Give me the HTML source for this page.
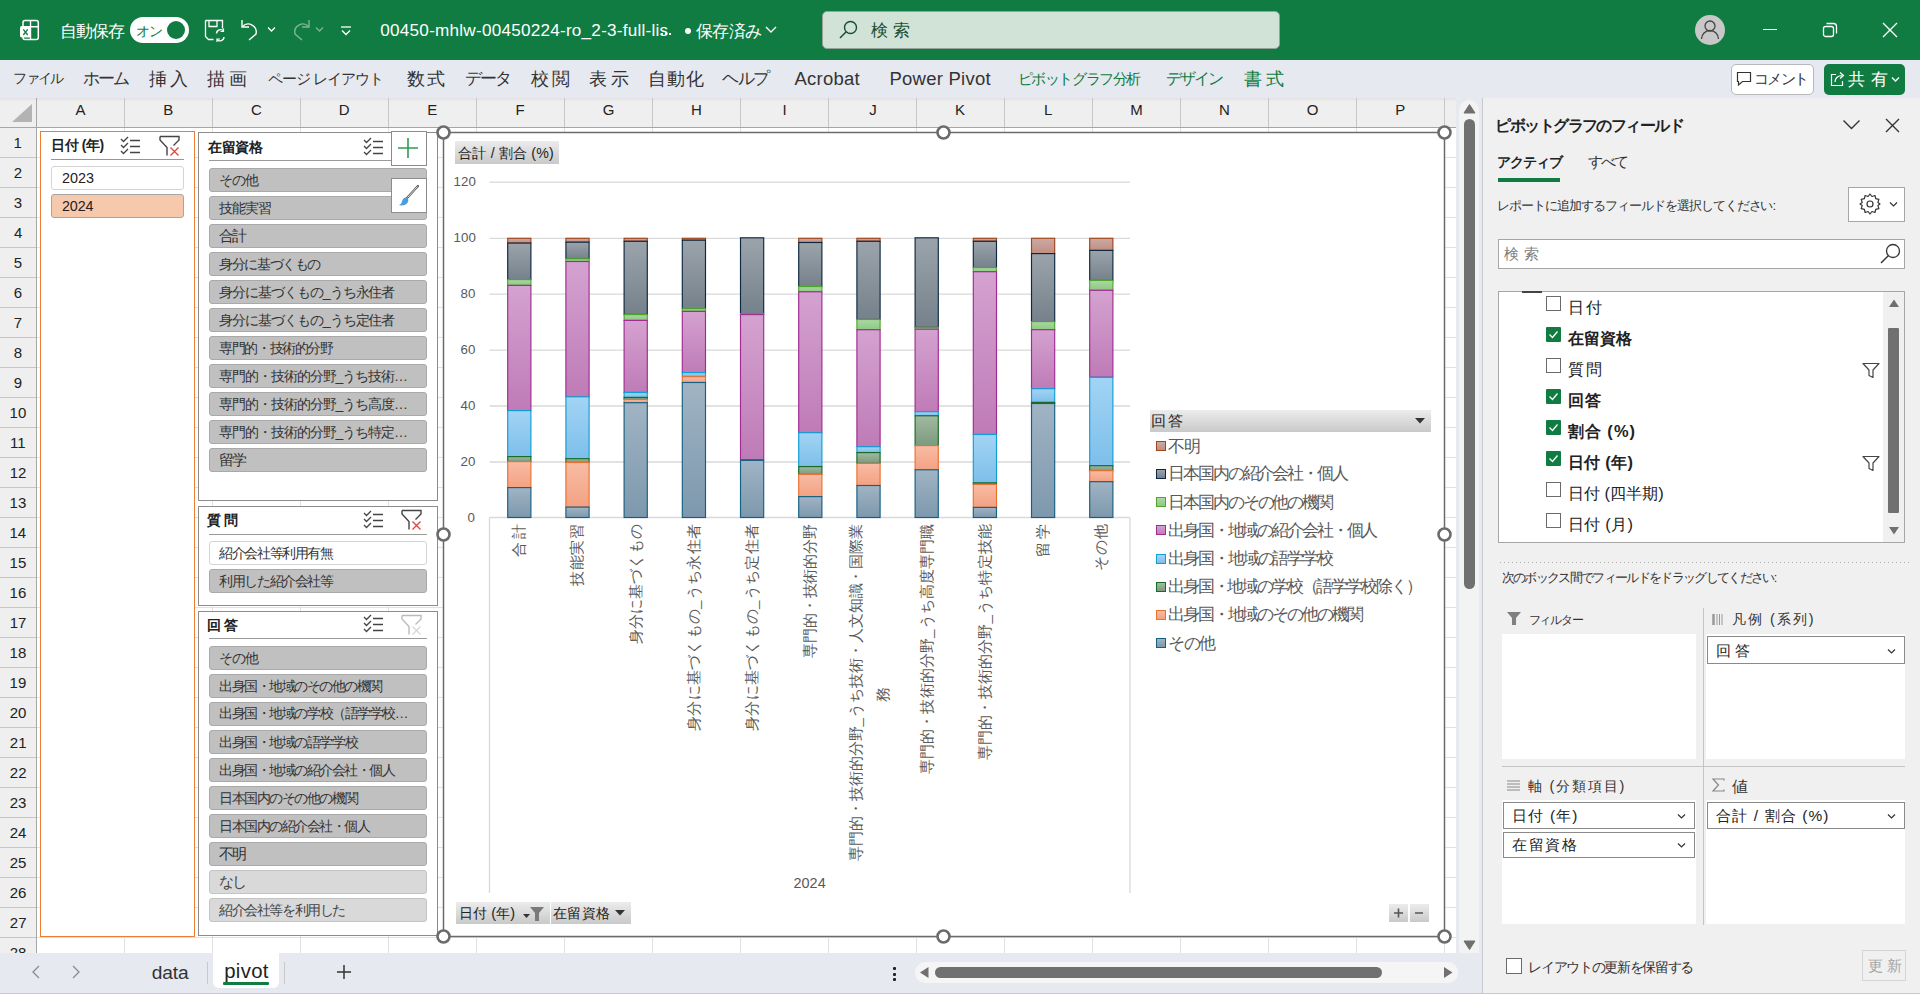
<!DOCTYPE html><html><head><meta charset="utf-8"><style>
*{margin:0;padding:0;box-sizing:border-box}
html,body{width:1920px;height:994px;overflow:hidden;background:#fff;font-family:"Liberation Sans",sans-serif;color:#222}
.a{position:absolute}
.t{position:absolute;white-space:nowrap}
.j{-webkit-text-stroke:0.6px currentColor}
svg{position:absolute;overflow:visible}
</style></head><body>
<div class="a" style="left:0px;top:0px;width:1920px;height:60px;background:#107c41"></div>
<svg style="left:18px;top:18px" width="24" height="24" viewBox="0 0 24 24"><rect x="5" y="2.6" width="15.3" height="19" rx="2" fill="none" stroke="#fff" stroke-width="1.5"/><path d="M12.5 2.6v19M5 8.7h15.3" stroke="#fff" stroke-width="1.4"/><rect x="2" y="8" width="11" height="11.5" rx="1.8" fill="#fff"/><path d="M5.3 11.3l4.4 5.7M9.7 11.3l-4.4 5.7" stroke="#107c41" stroke-width="1.3"/></svg>
<div class="t j" style="--w:63.5;left:59.93px;top:20.5px;line-height:20px;font-size:20.7px;letter-spacing:-0.124px;color:#fff;">自動保存</div>
<div class="a" style="left:130px;top:17px;width:59px;height:26px;background:#fff;border-radius:13px"></div>
<div class="a" style="left:167px;top:21px;width:18px;height:18px;border-radius:9px;background:#107c41"></div>
<div class="t j" style="--w:25.4;left:136.31px;top:20.5px;line-height:20px;font-size:16.93px;letter-spacing:-0.300px;color:#107c41;">オン</div>
<svg style="left:204px;top:19px" width="22" height="22" viewBox="0 0 22 22"><path d="M1.5 1.5h17v8M1.5 1.5v16l3 3h5M5 1.5v6h8v-6" fill="none" stroke="#fff" stroke-width="1.3"/><path d="M12.5 14.5a4 4 0 0 1 7-2.5M20 18a4 4 0 0 1-7 2.5" fill="none" stroke="#fff" stroke-width="1.4"/><path d="M19.5 9.5v3h-3M13 23v-3h3" fill="none" stroke="#fff" stroke-width="1.2"/></svg>
<svg style="left:239px;top:18px" width="24" height="24" viewBox="0 0 24 24"><path d="M3 2v7h7" fill="none" stroke="#fff" stroke-width="1.4"/><path d="M3.5 8.5A8 8 0 0 1 17 16l-7 6" fill="none" stroke="#fff" stroke-width="1.4"/></svg>
<svg style="left:267px;top:26px" width="10" height="8"><path d="M1 1.5l3.5 3.5 3.5-3.5" fill="none" stroke="#fff" stroke-width="1.3"/></svg>
<svg style="left:288px;top:18px" width="24" height="24" viewBox="0 0 24 24" opacity="0.45"><path d="M21 2v7h-7" fill="none" stroke="#fff" stroke-width="1.4"/><path d="M20.5 8.5A8 8 0 0 0 7 16l7 6" fill="none" stroke="#fff" stroke-width="1.4"/></svg>
<svg style="left:315px;top:26px" width="10" height="8" opacity="0.45"><path d="M1 1.5l3.5 3.5 3.5-3.5" fill="none" stroke="#fff" stroke-width="1.3"/></svg>
<svg style="left:340px;top:26px" width="12" height="10"><path d="M1 1h10" stroke="#fff" stroke-width="1.3"/><path d="M2 4.5l4 4 4-4" fill="none" stroke="#fff" stroke-width="1.3"/></svg>
<div class="t" style="--w:280.9;left:380.33px;top:20.0px;line-height:20px;font-size:17.15px;letter-spacing:0.227px;color:#fff;">00450-mhlw-00450224-ro_2-3-full-lis</div>
<div class="a" style="left:661px;top:33px;width:2px;height:2px;background:#fff"></div><div class="a" style="left:665px;top:33px;width:2px;height:2px;background:#fff"></div><div class="a" style="left:669px;top:33px;width:2px;height:2px;background:#fff"></div>
<div class="a" style="left:684.5px;top:27.5px;width:6px;height:6px;border-radius:3px;background:#fff"></div>
<div class="t j" style="--w:64.2;left:696.43px;top:20.5px;line-height:20px;font-size:20.7px;letter-spacing:0.043px;color:#fff;">保存済み</div>
<svg style="left:765px;top:25px" width="12" height="10"><path d="M1 2l5 5 5-5" fill="none" stroke="#fff" stroke-width="1.4"/></svg>
<div class="a" style="left:822px;top:11px;width:458px;height:38px;background:#d0e3d6;border:1px solid #96a39c;border-radius:5px"></div>
<svg style="left:838px;top:19px" width="22" height="22" viewBox="0 0 22 22"><circle cx="12.5" cy="8.5" r="6" fill="none" stroke="#1b4d31" stroke-width="1.4"/><path d="M8.2 12.8L2 19" stroke="#1b4d31" stroke-width="1.5"/></svg>
<div class="t j" style="--w:43.3;left:870.93px;top:20.0px;line-height:20px;font-size:20.7px;letter-spacing:5.629px;color:#1b4d31;">検索</div>
<svg style="left:1694px;top:14px" width="32" height="32" viewBox="0 0 32 32"><circle cx="16" cy="16" r="15" fill="#c8c8c8"/><circle cx="16" cy="12" r="5" fill="none" stroke="#444" stroke-width="1.3"/><path d="M7.5 25a8.5 8.5 0 0 1 17 0" fill="none" stroke="#444" stroke-width="1.3"/></svg>
<div class="a" style="left:1763px;top:28.5px;width:14px;height:1.3000000000000007px;background:#fff"></div>
<svg style="left:1822px;top:22px" width="16" height="16" viewBox="0 0 16 16"><rect x="1.5" y="4.5" width="10" height="10" rx="2" fill="none" stroke="#fff" stroke-width="1.3"/><path d="M4.5 1.5h7a3 3 0 0 1 3 3v7" fill="none" stroke="#fff" stroke-width="1.3"/></svg>
<svg style="left:1882px;top:22px" width="16" height="16" viewBox="0 0 16 16"><path d="M1 1l14 14M15 1L1 15" stroke="#fff" stroke-width="1.4"/></svg>
<div class="a" style="left:0px;top:60px;width:1920px;height:38px;background:#e6e9ef"></div>
<div class="t j" style="--w:49.3;left:13.36px;top:69.0px;line-height:20px;font-size:16.43px;letter-spacing:0.325px;color:#333;">ファイル</div>
<div class="t j" style="--w:45.0;left:83.00px;top:69.0px;line-height:20px;font-size:20.01px;letter-spacing:0.004px;color:#333;">ホーム</div>
<div class="t j" style="--w:42.6;left:148.87px;top:69.0px;line-height:20px;font-size:21.27px;letter-spacing:5.316px;color:#333;">挿入</div>
<div class="t j" style="--w:42.6;left:207.37px;top:69.0px;line-height:20px;font-size:21.27px;letter-spacing:5.316px;color:#333;">描画</div>
<div class="t j" style="--w:114.7;left:268.17px;top:69.0px;line-height:20px;font-size:18.27px;letter-spacing:-0.255px;color:#333;">ページ レイアウト</div>
<div class="t j" style="--w:40.6;left:406.87px;top:69.0px;line-height:20px;font-size:21.27px;letter-spacing:4.316px;color:#333;">数式</div>
<div class="t j" style="--w:45.0;left:465.00px;top:69.0px;line-height:20px;font-size:20.01px;letter-spacing:0.004px;color:#333;">データ</div>
<div class="t j" style="--w:42.6;left:530.87px;top:69.0px;line-height:20px;font-size:21.27px;letter-spacing:5.316px;color:#333;">校閲</div>
<div class="t j" style="--w:43.6;left:588.87px;top:69.0px;line-height:20px;font-size:21.27px;letter-spacing:5.816px;color:#333;">表示</div>
<div class="t j" style="--w:56.7;left:647.87px;top:69.0px;line-height:20px;font-size:21.27px;letter-spacing:2.908px;color:#333;">自動化</div>
<div class="t j" style="--w:45.6;left:722.47px;top:69.0px;line-height:20px;font-size:20.25px;letter-spacing:0.188px;color:#333;">ヘルプ</div>
<div class="t j" style="--w:122.1;left:1017.69px;top:69.0px;line-height:20px;font-size:18.09px;letter-spacing:-0.430px;color:#107c41;">ピボットグラフ分析</div>
<div class="t j" style="--w:56.3;left:1165.62px;top:69.0px;line-height:20px;font-size:18.75px;letter-spacing:0.067px;color:#107c41;">デザイン</div>
<div class="t j" style="--w:43.6;left:1243.87px;top:69.0px;line-height:20px;font-size:21.27px;letter-spacing:5.816px;color:#107c41;">書式</div>
<div class="t" style="--w:63.8;left:794.46px;top:69.0px;line-height:20px;font-size:18.48px;letter-spacing:0.256px;color:#333;">Acrobat</div>
<div class="t" style="--w:98.8;left:889.48px;top:69.0px;line-height:20px;font-size:18.49px;letter-spacing:0.252px;color:#333;">Power Pivot</div>
<div class="a" style="left:1731px;top:64px;width:83px;height:31px;background:#fff;border:1px solid #b8b8b8;border-radius:5px"></div>
<svg style="left:1736px;top:71px" width="16" height="16" viewBox="0 0 16 16"><path d="M1.5 1.5h13v9h-8l-4 3.5v-3.5h-1z" fill="none" stroke="#333" stroke-width="1.2"/></svg>
<div class="t j" style="--w:53.1;left:1754.23px;top:69.0px;line-height:20px;font-size:17.68px;letter-spacing:-0.737px;color:#333;">コメント</div>
<div class="a" style="left:1824px;top:64px;width:81px;height:31px;background:#107c41;border-radius:5px"></div>
<svg style="left:1829px;top:70px" width="18" height="18" viewBox="0 0 18 18"><path d="M7 4.5H2.5v11h11V11" fill="none" stroke="#fff" stroke-width="1.2"/><path d="M6 12c0-4 3-6.5 7-6.5M11 2.5l3.5 3-3.5 3" fill="none" stroke="#fff" stroke-width="1.2"/></svg>
<div class="t j" style="--w:44.3;left:1848.43px;top:69.0px;line-height:20px;font-size:20.7px;letter-spacing:6.129px;color:#fff;">共有</div>
<svg style="left:1891px;top:76px" width="10" height="8"><path d="M1 1.5l3.5 3.5 3.5-3.5" fill="none" stroke="#fff" stroke-width="1.3"/></svg>
<div class="a" style="left:37px;top:128px;width:1419px;height:825px;background-color:#fff;background-image:linear-gradient(to right,#e1e1e1 1px,transparent 1px),linear-gradient(to bottom,#e1e1e1 1px,transparent 1px);background-size:88px 30px;background-position:87px 29px"></div>
<div class="a" style="left:0px;top:98px;width:1456px;height:30px;background:linear-gradient(#e2e2e2,#efefef 4px);border-bottom:1px solid #a6a6a6"></div>
<svg style="left:6px;top:102px" width="28" height="22"><polygon points="26,2 26,20 6,20" fill="#b3b3b3"/></svg>
<div class="a" style="left:36px;top:98px;width:1px;height:30px;background:#a6a6a6"></div>
<div class="a" style="left:124px;top:98px;width:1px;height:29px;background:#c6c6c6"></div>
<div class="t" style="left:75.50px;top:99.5px;line-height:20px;font-size:15px;color:#222;">A</div>
<div class="a" style="left:212px;top:98px;width:1px;height:29px;background:#c6c6c6"></div>
<div class="t" style="left:163.28px;top:99.5px;line-height:20px;font-size:15px;color:#222;">B</div>
<div class="a" style="left:300px;top:98px;width:1px;height:29px;background:#c6c6c6"></div>
<div class="t" style="left:250.99px;top:99.5px;line-height:20px;font-size:15px;color:#222;">C</div>
<div class="a" style="left:388px;top:98px;width:1px;height:29px;background:#c6c6c6"></div>
<div class="t" style="left:338.83px;top:99.5px;line-height:20px;font-size:15px;color:#222;">D</div>
<div class="a" style="left:476px;top:98px;width:1px;height:29px;background:#c6c6c6"></div>
<div class="t" style="left:427.20px;top:99.5px;line-height:20px;font-size:15px;color:#222;">E</div>
<div class="a" style="left:564px;top:98px;width:1px;height:29px;background:#c6c6c6"></div>
<div class="t" style="left:515.60px;top:99.5px;line-height:20px;font-size:15px;color:#222;">F</div>
<div class="a" style="left:652px;top:98px;width:1px;height:29px;background:#c6c6c6"></div>
<div class="t" style="left:602.85px;top:99.5px;line-height:20px;font-size:15px;color:#222;">G</div>
<div class="a" style="left:740px;top:98px;width:1px;height:29px;background:#c6c6c6"></div>
<div class="t" style="left:691.08px;top:99.5px;line-height:20px;font-size:15px;color:#222;">H</div>
<div class="a" style="left:828px;top:98px;width:1px;height:29px;background:#c6c6c6"></div>
<div class="t" style="left:782.42px;top:99.5px;line-height:20px;font-size:15px;color:#222;">I</div>
<div class="a" style="left:916px;top:98px;width:1px;height:29px;background:#c6c6c6"></div>
<div class="t" style="left:869.19px;top:99.5px;line-height:20px;font-size:15px;color:#222;">J</div>
<div class="a" style="left:1004px;top:98px;width:1px;height:29px;background:#c6c6c6"></div>
<div class="t" style="left:954.97px;top:99.5px;line-height:20px;font-size:15px;color:#222;">K</div>
<div class="a" style="left:1092px;top:98px;width:1px;height:29px;background:#c6c6c6"></div>
<div class="t" style="left:1043.96px;top:99.5px;line-height:20px;font-size:15px;color:#222;">L</div>
<div class="a" style="left:1180px;top:98px;width:1px;height:29px;background:#c6c6c6"></div>
<div class="t" style="left:1130.25px;top:99.5px;line-height:20px;font-size:15px;color:#222;">M</div>
<div class="a" style="left:1268px;top:98px;width:1px;height:29px;background:#c6c6c6"></div>
<div class="t" style="left:1219.08px;top:99.5px;line-height:20px;font-size:15px;color:#222;">N</div>
<div class="a" style="left:1356px;top:98px;width:1px;height:29px;background:#c6c6c6"></div>
<div class="t" style="left:1306.67px;top:99.5px;line-height:20px;font-size:15px;color:#222;">O</div>
<div class="a" style="left:1444px;top:98px;width:1px;height:29px;background:#c6c6c6"></div>
<div class="t" style="left:1395.28px;top:99.5px;line-height:20px;font-size:15px;color:#222;">P</div>
<div class="a" style="left:0px;top:128px;width:37px;height:825px;background:#efefef;border-right:1px solid #a6a6a6;overflow:hidden"></div>
<div class="a" style="left:0px;top:157px;width:36px;height:1px;background:#c6c6c6"></div>
<div class="t" style="left:13.62px;top:132.5px;line-height:20px;font-size:15px;color:#222;">1</div>
<div class="a" style="left:0px;top:187px;width:36px;height:1px;background:#c6c6c6"></div>
<div class="t" style="left:13.83px;top:162.5px;line-height:20px;font-size:15px;color:#222;">2</div>
<div class="a" style="left:0px;top:217px;width:36px;height:1px;background:#c6c6c6"></div>
<div class="t" style="left:13.87px;top:192.5px;line-height:20px;font-size:15px;color:#222;">3</div>
<div class="a" style="left:0px;top:247px;width:36px;height:1px;background:#c6c6c6"></div>
<div class="t" style="left:13.88px;top:222.5px;line-height:20px;font-size:15px;color:#222;">4</div>
<div class="a" style="left:0px;top:277px;width:36px;height:1px;background:#c6c6c6"></div>
<div class="t" style="left:13.84px;top:252.5px;line-height:20px;font-size:15px;color:#222;">5</div>
<div class="a" style="left:0px;top:307px;width:36px;height:1px;background:#c6c6c6"></div>
<div class="t" style="left:13.78px;top:282.5px;line-height:20px;font-size:15px;color:#222;">6</div>
<div class="a" style="left:0px;top:337px;width:36px;height:1px;background:#c6c6c6"></div>
<div class="t" style="left:13.82px;top:312.5px;line-height:20px;font-size:15px;color:#222;">7</div>
<div class="a" style="left:0px;top:367px;width:36px;height:1px;background:#c6c6c6"></div>
<div class="t" style="left:13.83px;top:342.5px;line-height:20px;font-size:15px;color:#222;">8</div>
<div class="a" style="left:0px;top:397px;width:36px;height:1px;background:#c6c6c6"></div>
<div class="t" style="left:13.83px;top:372.5px;line-height:20px;font-size:15px;color:#222;">9</div>
<div class="a" style="left:0px;top:427px;width:36px;height:1px;background:#c6c6c6"></div>
<div class="t" style="left:9.55px;top:402.5px;line-height:20px;font-size:15px;color:#222;">10</div>
<div class="a" style="left:0px;top:457px;width:36px;height:1px;background:#c6c6c6"></div>
<div class="t" style="left:10.12px;top:432.5px;line-height:20px;font-size:15px;color:#222;">11</div>
<div class="a" style="left:0px;top:487px;width:36px;height:1px;background:#c6c6c6"></div>
<div class="t" style="left:9.63px;top:462.5px;line-height:20px;font-size:15px;color:#222;">12</div>
<div class="a" style="left:0px;top:517px;width:36px;height:1px;background:#c6c6c6"></div>
<div class="t" style="left:9.59px;top:492.5px;line-height:20px;font-size:15px;color:#222;">13</div>
<div class="a" style="left:0px;top:547px;width:36px;height:1px;background:#c6c6c6"></div>
<div class="t" style="left:9.48px;top:522.5px;line-height:20px;font-size:15px;color:#222;">14</div>
<div class="a" style="left:0px;top:577px;width:36px;height:1px;background:#c6c6c6"></div>
<div class="t" style="left:9.57px;top:552.5px;line-height:20px;font-size:15px;color:#222;">15</div>
<div class="a" style="left:0px;top:607px;width:36px;height:1px;background:#c6c6c6"></div>
<div class="t" style="left:9.59px;top:582.5px;line-height:20px;font-size:15px;color:#222;">16</div>
<div class="a" style="left:0px;top:637px;width:36px;height:1px;background:#c6c6c6"></div>
<div class="t" style="left:9.63px;top:612.5px;line-height:20px;font-size:15px;color:#222;">17</div>
<div class="a" style="left:0px;top:667px;width:36px;height:1px;background:#c6c6c6"></div>
<div class="t" style="left:9.58px;top:642.5px;line-height:20px;font-size:15px;color:#222;">18</div>
<div class="a" style="left:0px;top:697px;width:36px;height:1px;background:#c6c6c6"></div>
<div class="t" style="left:9.61px;top:672.5px;line-height:20px;font-size:15px;color:#222;">19</div>
<div class="a" style="left:0px;top:727px;width:36px;height:1px;background:#c6c6c6"></div>
<div class="t" style="left:9.74px;top:702.5px;line-height:20px;font-size:15px;color:#222;">20</div>
<div class="a" style="left:0px;top:757px;width:36px;height:1px;background:#c6c6c6"></div>
<div class="t" style="left:9.82px;top:732.5px;line-height:20px;font-size:15px;color:#222;">21</div>
<div class="a" style="left:0px;top:787px;width:36px;height:1px;background:#c6c6c6"></div>
<div class="t" style="left:9.83px;top:762.5px;line-height:20px;font-size:15px;color:#222;">22</div>
<div class="a" style="left:0px;top:817px;width:36px;height:1px;background:#c6c6c6"></div>
<div class="t" style="left:9.78px;top:792.5px;line-height:20px;font-size:15px;color:#222;">23</div>
<div class="a" style="left:0px;top:847px;width:36px;height:1px;background:#c6c6c6"></div>
<div class="t" style="left:9.67px;top:822.5px;line-height:20px;font-size:15px;color:#222;">24</div>
<div class="a" style="left:0px;top:877px;width:36px;height:1px;background:#c6c6c6"></div>
<div class="t" style="left:9.77px;top:852.5px;line-height:20px;font-size:15px;color:#222;">25</div>
<div class="a" style="left:0px;top:907px;width:36px;height:1px;background:#c6c6c6"></div>
<div class="t" style="left:9.78px;top:882.5px;line-height:20px;font-size:15px;color:#222;">26</div>
<div class="a" style="left:0px;top:937px;width:36px;height:1px;background:#c6c6c6"></div>
<div class="t" style="left:9.83px;top:912.5px;line-height:20px;font-size:15px;color:#222;">27</div>
<div class="a" style="left:0px;top:967px;width:36px;height:1px;background:#c6c6c6"></div>
<div class="t" style="left:9.78px;top:942.5px;line-height:20px;font-size:15px;color:#222;">28</div>
<div class="a" style="left:40px;top:131px;width:155px;height:806px;background:#fff;border:1.5px solid #ed7d31"></div>
<div class="t j" style="--w:52.7;left:50.95px;top:135.4px;line-height:20px;font-size:16.52px;letter-spacing:-0.545px;color:#222;font-weight:bold;">日付 (年)</div>
<svg style="left:120px;top:136px" width="22" height="20" viewBox="0 0 22 20"><path d="M1 3l2.5 2.5L8 1M1 9l2.5 2.5L8 7M1 15l2.5 2.5L8 13" fill="none" stroke="#444" stroke-width="1.3"/><path d="M10 4.5h10M10 10.5h10M10 16.5h10" stroke="#444" stroke-width="1.4"/></svg>
<svg style="left:159px;top:135px" width="22" height="22" viewBox="0 0 22 22"><path d="M1 1.5h19v3.5l-5.5 5.5M13.5 12M8 20.5v-8L1 5V1.5" fill="none" stroke="#444" stroke-width="1.4"/><path d="M11.5 12.5l8 8M19.5 12.5l-8 8" stroke="#e8413a" stroke-width="1.3"/></svg>
<div class="a" style="left:51px;top:158.7px;width:133px;height:1.3000000000000114px;background:#ed7d31"></div>
<div class="a" style="left:51px;top:166px;width:133px;height:24px;background:#fff;border:1px solid #d4d4d4;border-radius:3px"></div>
<div class="t" style="--w:32.0;left:61.98px;top:168.0px;line-height:20px;font-size:14.36px;letter-spacing:-0.011px;color:#222;">2023</div>
<div class="a" style="left:51px;top:194px;width:133px;height:24px;background:#f6c8ac;border:1px solid #a6a6a6;border-radius:3px"></div>
<div class="t" style="--w:31.7;left:61.98px;top:196.0px;line-height:20px;font-size:14.27px;letter-spacing:-0.067px;color:#222;">2024</div>
<div class="a" style="left:198px;top:132px;width:240px;height:369px;background:#fff;border:1.5px solid #8c8c8c"></div>
<div class="t j" style="--w:55.8;left:207.57px;top:136.5px;line-height:20px;font-size:17.25px;letter-spacing:0.941px;color:#222;font-weight:bold;">在留資格</div>
<svg style="left:363px;top:137px" width="22" height="20" viewBox="0 0 22 20"><path d="M1 3l2.5 2.5L8 1M1 9l2.5 2.5L8 7M1 15l2.5 2.5L8 13" fill="none" stroke="#444" stroke-width="1.3"/><path d="M10 4.5h10M10 10.5h10M10 16.5h10" stroke="#444" stroke-width="1.4"/></svg>
<div class="a" style="left:209px;top:160px;width:218px;height:1px;background:#9a9a9a"></div>
<div class="a" style="left:209px;top:168px;width:218px;height:24px;background:#c0c0c0;border:1px solid #a9a9a9;border-radius:3px"></div>
<div class="t j" style="--w:38.6;left:219.28px;top:170.0px;line-height:20px;font-size:17.18px;letter-spacing:-0.119px;color:#333;">その他</div>
<div class="a" style="left:209px;top:196px;width:218px;height:24px;background:#c0c0c0;border:1px solid #a9a9a9;border-radius:3px"></div>
<div class="t j" style="--w:51.0;left:219.30px;top:198.0px;line-height:20px;font-size:17.0px;letter-spacing:-0.246px;color:#333;">技能実習</div>
<div class="a" style="left:209px;top:224px;width:218px;height:24px;background:#c0c0c0;border:1px solid #a9a9a9;border-radius:3px"></div>
<div class="t j" style="--w:26.3;left:219.24px;top:226.0px;line-height:20px;font-size:17.55px;letter-spacing:-0.841px;color:#333;">合計</div>
<div class="a" style="left:209px;top:252px;width:218px;height:24px;background:#c0c0c0;border:1px solid #a9a9a9;border-radius:3px"></div>
<div class="t j" style="--w:100.6;left:219.32px;top:254.0px;line-height:20px;font-size:16.76px;letter-spacing:-0.430px;color:#333;">身分に基づくもの</div>
<div class="a" style="left:209px;top:280px;width:218px;height:24px;background:#c0c0c0;border:1px solid #a9a9a9;border-radius:3px"></div>
<div class="t j" style="--w:175.1;left:219.30px;top:282.0px;line-height:20px;font-size:16.98px;letter-spacing:-0.210px;color:#333;">身分に基づくもの_うち永住者</div>
<div class="a" style="left:209px;top:308px;width:218px;height:24px;background:#c0c0c0;border:1px solid #a9a9a9;border-radius:3px"></div>
<div class="t j" style="--w:175.1;left:219.30px;top:310.0px;line-height:20px;font-size:16.98px;letter-spacing:-0.210px;color:#333;">身分に基づくもの_うち定住者</div>
<div class="a" style="left:209px;top:336px;width:218px;height:24px;background:#c0c0c0;border:1px solid #a9a9a9;border-radius:3px"></div>
<div class="t j" style="--w:113.0;left:219.33px;top:338.0px;line-height:20px;font-size:16.73px;letter-spacing:-0.449px;color:#333;">専門的・技術的分野</div>
<div class="a" style="left:209px;top:364px;width:218px;height:24px;background:#c0c0c0;border:1px solid #a9a9a9;border-radius:3px"></div>
<div class="t j" style="--w:187.8;left:219.34px;top:366.0px;line-height:20px;font-size:16.62px;letter-spacing:-0.479px;color:#333;">専門的・技術的分野_うち技術…</div>
<div class="a" style="left:209px;top:392px;width:218px;height:24px;background:#c0c0c0;border:1px solid #a9a9a9;border-radius:3px"></div>
<div class="t j" style="--w:187.8;left:219.34px;top:394.0px;line-height:20px;font-size:16.62px;letter-spacing:-0.479px;color:#333;">専門的・技術的分野_うち高度…</div>
<div class="a" style="left:209px;top:420px;width:218px;height:24px;background:#c0c0c0;border:1px solid #a9a9a9;border-radius:3px"></div>
<div class="t j" style="--w:187.8;left:219.34px;top:422.0px;line-height:20px;font-size:16.62px;letter-spacing:-0.479px;color:#333;">専門的・技術的分野_うち特定…</div>
<div class="a" style="left:209px;top:448px;width:218px;height:24px;background:#c0c0c0;border:1px solid #a9a9a9;border-radius:3px"></div>
<div class="t j" style="--w:26.3;left:219.24px;top:450.0px;line-height:20px;font-size:17.55px;letter-spacing:-0.841px;color:#333;">留学</div>
<div class="a" style="left:391px;top:131px;width:36px;height:35px;background:#fff;border:1px solid #8c8c8c"></div>
<svg style="left:397px;top:137px" width="22" height="22"><path d="M11 1v20M1 11h20" stroke="#2e9a55" stroke-width="1.6"/></svg>
<div class="a" style="left:391px;top:178px;width:36px;height:35px;background:#fff;border:1px solid #8c8c8c"></div>
<svg style="left:396px;top:183px" width="26" height="26" viewBox="0 0 26 26"><path d="M22 3L11 15" stroke="#555" stroke-width="2.2" stroke-linecap="round"/><path d="M21.5 3.5L11.5 14.5" stroke="#fff" stroke-width="0.8"/><path d="M10.5 14.5c-3 0-4 2-4.5 4s-2 3.5-3.5 3.5c3 1 8 0.5 9.5-3 0.8-2 0-3.5-1.5-4.5z" fill="#4a9ee0"/></svg>
<div class="a" style="left:198px;top:506px;width:240px;height:100px;background:#fff;border:1.5px solid #8c8c8c"></div>
<div class="t j" style="--w:33.0;left:207.27px;top:510.0px;line-height:20px;font-size:17.25px;letter-spacing:3.524px;color:#222;font-weight:bold;">質問</div>
<svg style="left:363px;top:510px" width="22" height="20" viewBox="0 0 22 20"><path d="M1 3l2.5 2.5L8 1M1 9l2.5 2.5L8 7M1 15l2.5 2.5L8 13" fill="none" stroke="#444" stroke-width="1.3"/><path d="M10 4.5h10M10 10.5h10M10 16.5h10" stroke="#444" stroke-width="1.4"/></svg>
<svg style="left:401px;top:509px" width="22" height="22" viewBox="0 0 22 22"><path d="M1 1.5h19v3.5l-5.5 5.5M13.5 12M8 20.5v-8L1 5V1.5" fill="none" stroke="#444" stroke-width="1.4"/><path d="M11.5 12.5l8 8M19.5 12.5l-8 8" stroke="#e8413a" stroke-width="1.3"/></svg>
<div class="a" style="left:209px;top:534px;width:218px;height:1px;background:#9a9a9a"></div>
<div class="a" style="left:209px;top:541px;width:218px;height:24px;background:#fff;border:1px solid #d4d4d4;border-radius:3px"></div>
<div class="t j" style="--w:113.0;left:219.33px;top:543.0px;line-height:20px;font-size:16.73px;letter-spacing:-0.449px;color:#333;">紹介会社等利用有無</div>
<div class="a" style="left:209px;top:569px;width:218px;height:24px;background:#c0c0c0;border:1px solid #a9a9a9;border-radius:3px"></div>
<div class="t j" style="--w:113.0;left:219.33px;top:571.0px;line-height:20px;font-size:16.73px;letter-spacing:-0.449px;color:#333;">利用した紹介会社等</div>
<div class="a" style="left:198px;top:611px;width:240px;height:325px;background:#fff;border:1.5px solid #8c8c8c"></div>
<div class="t j" style="--w:33.0;left:207.27px;top:614.5px;line-height:20px;font-size:17.25px;letter-spacing:3.524px;color:#222;font-weight:bold;">回答</div>
<svg style="left:363px;top:614px" width="22" height="20" viewBox="0 0 22 20"><path d="M1 3l2.5 2.5L8 1M1 9l2.5 2.5L8 7M1 15l2.5 2.5L8 13" fill="none" stroke="#444" stroke-width="1.3"/><path d="M10 4.5h10M10 10.5h10M10 16.5h10" stroke="#444" stroke-width="1.4"/></svg>
<svg style="left:401px;top:614px" width="22" height="22" viewBox="0 0 22 22"><path d="M1 1.5h19v3.5l-5.5 5.5M13.5 12M8 20.5v-8L1 5V1.5" fill="none" stroke="#bbb" stroke-width="1.4"/><path d="M11.5 12.5l8 8M19.5 12.5l-8 8" stroke="#d8d8d8" stroke-width="1.3"/></svg>
<div class="a" style="left:209px;top:638px;width:218px;height:1px;background:#9a9a9a"></div>
<div class="a" style="left:209px;top:646px;width:218px;height:24px;background:#c0c0c0;border:1px solid #a9a9a9;border-radius:3px"></div>
<div class="t j" style="--w:38.6;left:219.28px;top:648.0px;line-height:20px;font-size:17.18px;letter-spacing:-0.119px;color:#333;">その他</div>
<div class="a" style="left:209px;top:674px;width:218px;height:24px;background:#c0c0c0;border:1px solid #a9a9a9;border-radius:3px"></div>
<div class="t j" style="--w:162.5;left:219.33px;top:676.0px;line-height:20px;font-size:16.67px;letter-spacing:-0.496px;color:#333;">出身国・地域のその他の機関</div>
<div class="a" style="left:209px;top:702px;width:218px;height:24px;background:#c0c0c0;border:1px solid #a9a9a9;border-radius:3px"></div>
<div class="t j" style="--w:187.8;left:219.37px;top:704.0px;line-height:20px;font-size:16.33px;letter-spacing:0.252px;color:#333;">出身国・地域の学校（語学学校…</div>
<div class="a" style="left:209px;top:730px;width:218px;height:24px;background:#c0c0c0;border:1px solid #a9a9a9;border-radius:3px"></div>
<div class="t j" style="--w:137.7;left:219.33px;top:732.0px;line-height:20px;font-size:16.7px;letter-spacing:-0.477px;color:#333;">出身国・地域の語学学校</div>
<div class="a" style="left:209px;top:758px;width:218px;height:24px;background:#c0c0c0;border:1px solid #a9a9a9;border-radius:3px"></div>
<div class="t j" style="--w:174.9;left:219.33px;top:760.0px;line-height:20px;font-size:16.66px;letter-spacing:-0.504px;color:#333;">出身国・地域の紹介会社・個人</div>
<div class="a" style="left:209px;top:786px;width:218px;height:24px;background:#c0c0c0;border:1px solid #a9a9a9;border-radius:3px"></div>
<div class="t j" style="--w:137.7;left:219.33px;top:788.0px;line-height:20px;font-size:16.7px;letter-spacing:-0.477px;color:#333;">日本国内のその他の機関</div>
<div class="a" style="left:209px;top:814px;width:218px;height:24px;background:#c0c0c0;border:1px solid #a9a9a9;border-radius:3px"></div>
<div class="t j" style="--w:150.1;left:219.33px;top:816.0px;line-height:20px;font-size:16.68px;letter-spacing:-0.488px;color:#333;">日本国内の紹介会社・個人</div>
<div class="a" style="left:209px;top:842px;width:218px;height:24px;background:#c0c0c0;border:1px solid #a9a9a9;border-radius:3px"></div>
<div class="t j" style="--w:26.3;left:219.24px;top:844.0px;line-height:20px;font-size:17.55px;letter-spacing:-0.841px;color:#333;">不明</div>
<div class="a" style="left:209px;top:870px;width:218px;height:24px;background:#d9d9d9;border:1px solid #c4c4c4;border-radius:3px"></div>
<div class="t j" style="--w:26.3;left:219.24px;top:872.0px;line-height:20px;font-size:17.55px;letter-spacing:-0.841px;color:#444;">なし</div>
<div class="a" style="left:209px;top:898px;width:218px;height:24px;background:#d9d9d9;border:1px solid #c4c4c4;border-radius:3px"></div>
<div class="t j" style="--w:125.4;left:219.33px;top:900.0px;line-height:20px;font-size:16.71px;letter-spacing:-0.464px;color:#444;">紹介会社等を利用した</div>
<div class="a" style="left:444px;top:133px;width:1000px;height:804px;background:#fff"></div>
<div class="a" style="left:455px;top:141px;width:104px;height:23px;background:linear-gradient(#ececec,#c9c9c9)"></div>
<div class="t j" style="--w:95.8;left:458.31px;top:142.5px;line-height:20px;font-size:16.9px;letter-spacing:-0.289px;color:#222;">合計 / 割合 (%)</div>
<svg style="left:0;top:0" width="1920" height="994"><path d="M489.5 517.5H1130" stroke="#d9d9d9" stroke-width="1.3"/><path d="M489.5 462.0H1130" stroke="#d9d9d9" stroke-width="1.3"/><path d="M489.5 406.0H1130" stroke="#d9d9d9" stroke-width="1.3"/><path d="M489.5 350.2H1130" stroke="#d9d9d9" stroke-width="1.3"/><path d="M489.5 294.2H1130" stroke="#d9d9d9" stroke-width="1.3"/><path d="M489.5 238.3H1130" stroke="#d9d9d9" stroke-width="1.3"/><path d="M489.5 182.1H1130" stroke="#d9d9d9" stroke-width="1.3"/><path d="M489.5 517.5V893M1130 517.5V893" stroke="#d9d9d9" stroke-width="1.3"/><defs><linearGradient id="g0" x1="0" y1="0" x2="0" y2="1"><stop offset="0" stop-color="#a0b4c4"/><stop offset="1" stop-color="#7d98ad"/></linearGradient><linearGradient id="g1" x1="0" y1="0" x2="0" y2="1"><stop offset="0" stop-color="#f8bca4"/><stop offset="1" stop-color="#f3a183"/></linearGradient><linearGradient id="g2" x1="0" y1="0" x2="0" y2="1"><stop offset="0" stop-color="#a2b9a3"/><stop offset="1" stop-color="#7b9a7e"/></linearGradient><linearGradient id="g3" x1="0" y1="0" x2="0" y2="1"><stop offset="0" stop-color="#a2d4f4"/><stop offset="1" stop-color="#7dbfea"/></linearGradient><linearGradient id="g4" x1="0" y1="0" x2="0" y2="1"><stop offset="0" stop-color="#d4a2d0"/><stop offset="1" stop-color="#bf7bb7"/></linearGradient><linearGradient id="g5" x1="0" y1="0" x2="0" y2="1"><stop offset="0" stop-color="#acd8a3"/><stop offset="1" stop-color="#8dc983"/></linearGradient><linearGradient id="g6" x1="0" y1="0" x2="0" y2="1"><stop offset="0" stop-color="#9ca4ab"/><stop offset="1" stop-color="#75818b"/></linearGradient><linearGradient id="g7" x1="0" y1="0" x2="0" y2="1"><stop offset="0" stop-color="#ccaaa3"/><stop offset="1" stop-color="#c08f83"/></linearGradient></defs><rect x="507.7" y="238.3" width="23.2" height="4.8" fill="url(#g7)" stroke="#a0461c" stroke-width="1.15"/><rect x="507.7" y="243.1" width="23.2" height="36.5" fill="url(#g6)" stroke="#0e2841" stroke-width="1.15"/><rect x="507.7" y="279.6" width="23.2" height="5.8" fill="url(#g5)" stroke="#4ea72e" stroke-width="1.15"/><rect x="507.7" y="285.4" width="23.2" height="125.2" fill="url(#g4)" stroke="#a02b93" stroke-width="1.15"/><rect x="507.7" y="410.6" width="23.2" height="46.1" fill="url(#g3)" stroke="#0f9ed5" stroke-width="1.15"/><rect x="507.7" y="456.6" width="23.2" height="5.0" fill="url(#g2)" stroke="#196b24" stroke-width="1.15"/><rect x="507.7" y="461.6" width="23.2" height="26.0" fill="url(#g1)" stroke="#e97132" stroke-width="1.15"/><rect x="507.7" y="487.6" width="23.2" height="29.9" fill="url(#g0)" stroke="#156082" stroke-width="1.15"/><rect x="565.9" y="238.3" width="23.2" height="3.9" fill="url(#g7)" stroke="#a0461c" stroke-width="1.15"/><rect x="565.9" y="242.2" width="23.2" height="16.6" fill="url(#g6)" stroke="#0e2841" stroke-width="1.15"/><rect x="565.9" y="258.8" width="23.2" height="2.6" fill="url(#g5)" stroke="#4ea72e" stroke-width="1.15"/><rect x="565.9" y="261.5" width="23.2" height="135.4" fill="url(#g4)" stroke="#a02b93" stroke-width="1.15"/><rect x="565.9" y="396.8" width="23.2" height="61.9" fill="url(#g3)" stroke="#0f9ed5" stroke-width="1.15"/><rect x="565.9" y="458.7" width="23.2" height="3.8" fill="url(#g2)" stroke="#196b24" stroke-width="1.15"/><rect x="565.9" y="462.5" width="23.2" height="44.6" fill="url(#g1)" stroke="#e97132" stroke-width="1.15"/><rect x="565.9" y="507.1" width="23.2" height="10.4" fill="url(#g0)" stroke="#156082" stroke-width="1.15"/><rect x="624.1" y="238.3" width="23.2" height="3.0" fill="url(#g7)" stroke="#a0461c" stroke-width="1.15"/><rect x="624.1" y="241.3" width="23.2" height="73.2" fill="url(#g6)" stroke="#0e2841" stroke-width="1.15"/><rect x="624.1" y="314.6" width="23.2" height="5.8" fill="url(#g5)" stroke="#4ea72e" stroke-width="1.15"/><rect x="624.1" y="320.4" width="23.2" height="72.1" fill="url(#g4)" stroke="#a02b93" stroke-width="1.15"/><rect x="624.1" y="392.5" width="23.2" height="5.0" fill="url(#g3)" stroke="#0f9ed5" stroke-width="1.15"/><rect x="624.1" y="397.4" width="23.2" height="2.0" fill="url(#g2)" stroke="#196b24" stroke-width="1.15"/><rect x="624.1" y="399.5" width="23.2" height="3.2" fill="url(#g1)" stroke="#e97132" stroke-width="1.15"/><rect x="624.1" y="402.7" width="23.2" height="114.8" fill="url(#g0)" stroke="#156082" stroke-width="1.15"/><rect x="682.3" y="238.3" width="23.2" height="1.9" fill="url(#g7)" stroke="#a0461c" stroke-width="1.15"/><rect x="682.3" y="240.2" width="23.2" height="68.6" fill="url(#g6)" stroke="#0e2841" stroke-width="1.15"/><rect x="682.3" y="308.7" width="23.2" height="2.6" fill="url(#g5)" stroke="#4ea72e" stroke-width="1.15"/><rect x="682.3" y="311.4" width="23.2" height="61.3" fill="url(#g4)" stroke="#a02b93" stroke-width="1.15"/><rect x="682.3" y="372.6" width="23.2" height="3.8" fill="url(#g3)" stroke="#0f9ed5" stroke-width="1.15"/><rect x="682.3" y="376.7" width="23.2" height="5.8" fill="url(#g1)" stroke="#e97132" stroke-width="1.15"/><rect x="682.3" y="382.5" width="23.2" height="135.0" fill="url(#g0)" stroke="#156082" stroke-width="1.15"/><rect x="740.5" y="237.8" width="23.2" height="75.9" fill="url(#g6)" stroke="#0e2841" stroke-width="1.15"/><rect x="740.5" y="313.7" width="23.2" height="0.9" fill="url(#g5)" stroke="#4ea72e" stroke-width="1.15"/><rect x="740.5" y="314.6" width="23.2" height="145.0" fill="url(#g4)" stroke="#a02b93" stroke-width="1.15"/><rect x="740.5" y="460.4" width="23.2" height="57.1" fill="url(#g0)" stroke="#156082" stroke-width="1.15"/><rect x="798.7" y="238.3" width="23.2" height="4.2" fill="url(#g7)" stroke="#a0461c" stroke-width="1.15"/><rect x="798.7" y="242.5" width="23.2" height="44.1" fill="url(#g6)" stroke="#0e2841" stroke-width="1.15"/><rect x="798.7" y="286.6" width="23.2" height="5.3" fill="url(#g5)" stroke="#4ea72e" stroke-width="1.15"/><rect x="798.7" y="291.8" width="23.2" height="140.9" fill="url(#g4)" stroke="#a02b93" stroke-width="1.15"/><rect x="798.7" y="432.7" width="23.2" height="33.8" fill="url(#g3)" stroke="#0f9ed5" stroke-width="1.15"/><rect x="798.7" y="466.6" width="23.2" height="7.9" fill="url(#g2)" stroke="#196b24" stroke-width="1.15"/><rect x="798.7" y="474.4" width="23.2" height="22.2" fill="url(#g1)" stroke="#e97132" stroke-width="1.15"/><rect x="798.7" y="496.6" width="23.2" height="20.9" fill="url(#g0)" stroke="#156082" stroke-width="1.15"/><rect x="856.9" y="238.3" width="23.2" height="3.0" fill="url(#g7)" stroke="#a0461c" stroke-width="1.15"/><rect x="856.9" y="241.3" width="23.2" height="78.2" fill="url(#g6)" stroke="#0e2841" stroke-width="1.15"/><rect x="856.9" y="319.5" width="23.2" height="10.2" fill="url(#g5)" stroke="#4ea72e" stroke-width="1.15"/><rect x="856.9" y="329.7" width="23.2" height="117.0" fill="url(#g4)" stroke="#a02b93" stroke-width="1.15"/><rect x="856.9" y="446.7" width="23.2" height="5.8" fill="url(#g3)" stroke="#0f9ed5" stroke-width="1.15"/><rect x="856.9" y="452.6" width="23.2" height="10.8" fill="url(#g2)" stroke="#196b24" stroke-width="1.15"/><rect x="856.9" y="463.4" width="23.2" height="22.2" fill="url(#g1)" stroke="#e97132" stroke-width="1.15"/><rect x="856.9" y="485.5" width="23.2" height="32.0" fill="url(#g0)" stroke="#156082" stroke-width="1.15"/><rect x="915.1" y="237.8" width="23.2" height="89.6" fill="url(#g6)" stroke="#0e2841" stroke-width="1.15"/><rect x="915.1" y="327.4" width="23.2" height="1.8" fill="url(#g5)" stroke="#4ea72e" stroke-width="1.15"/><rect x="915.1" y="329.2" width="23.2" height="82.6" fill="url(#g4)" stroke="#a02b93" stroke-width="1.15"/><rect x="915.1" y="411.7" width="23.2" height="4.1" fill="url(#g3)" stroke="#0f9ed5" stroke-width="1.15"/><rect x="915.1" y="415.8" width="23.2" height="29.8" fill="url(#g2)" stroke="#196b24" stroke-width="1.15"/><rect x="915.1" y="445.6" width="23.2" height="24.2" fill="url(#g1)" stroke="#e97132" stroke-width="1.15"/><rect x="915.1" y="469.8" width="23.2" height="47.7" fill="url(#g0)" stroke="#156082" stroke-width="1.15"/><rect x="973.3" y="238.3" width="23.2" height="3.0" fill="url(#g7)" stroke="#a0461c" stroke-width="1.15"/><rect x="973.3" y="241.3" width="23.2" height="26.3" fill="url(#g6)" stroke="#0e2841" stroke-width="1.15"/><rect x="973.3" y="267.6" width="23.2" height="4.1" fill="url(#g5)" stroke="#4ea72e" stroke-width="1.15"/><rect x="973.3" y="271.7" width="23.2" height="162.8" fill="url(#g4)" stroke="#a02b93" stroke-width="1.15"/><rect x="973.3" y="434.5" width="23.2" height="48.4" fill="url(#g3)" stroke="#0f9ed5" stroke-width="1.15"/><rect x="973.3" y="482.9" width="23.2" height="1.5" fill="url(#g2)" stroke="#196b24" stroke-width="1.15"/><rect x="973.3" y="484.4" width="23.2" height="23.0" fill="url(#g1)" stroke="#e97132" stroke-width="1.15"/><rect x="973.3" y="507.4" width="23.2" height="10.1" fill="url(#g0)" stroke="#156082" stroke-width="1.15"/><rect x="1031.5" y="238.3" width="23.2" height="15.3" fill="url(#g7)" stroke="#a0461c" stroke-width="1.15"/><rect x="1031.5" y="253.6" width="23.2" height="68.0" fill="url(#g6)" stroke="#0e2841" stroke-width="1.15"/><rect x="1031.5" y="321.6" width="23.2" height="8.2" fill="url(#g5)" stroke="#4ea72e" stroke-width="1.15"/><rect x="1031.5" y="329.7" width="23.2" height="58.9" fill="url(#g4)" stroke="#a02b93" stroke-width="1.15"/><rect x="1031.5" y="388.7" width="23.2" height="13.7" fill="url(#g3)" stroke="#0f9ed5" stroke-width="1.15"/><rect x="1031.5" y="402.4" width="23.2" height="0.9" fill="url(#g2)" stroke="#196b24" stroke-width="1.15"/><rect x="1031.5" y="403.5" width="23.2" height="114.0" fill="url(#g0)" stroke="#156082" stroke-width="1.15"/><rect x="1089.7" y="238.3" width="23.2" height="12.1" fill="url(#g7)" stroke="#a0461c" stroke-width="1.15"/><rect x="1089.7" y="250.4" width="23.2" height="30.1" fill="url(#g6)" stroke="#0e2841" stroke-width="1.15"/><rect x="1089.7" y="280.4" width="23.2" height="9.9" fill="url(#g5)" stroke="#4ea72e" stroke-width="1.15"/><rect x="1089.7" y="290.3" width="23.2" height="86.9" fill="url(#g4)" stroke="#a02b93" stroke-width="1.15"/><rect x="1089.7" y="377.3" width="23.2" height="88.4" fill="url(#g3)" stroke="#0f9ed5" stroke-width="1.15"/><rect x="1089.7" y="465.7" width="23.2" height="5.0" fill="url(#g2)" stroke="#196b24" stroke-width="1.15"/><rect x="1089.7" y="470.7" width="23.2" height="11.1" fill="url(#g1)" stroke="#e97132" stroke-width="1.15"/><rect x="1089.7" y="481.7" width="23.2" height="35.8" fill="url(#g0)" stroke="#156082" stroke-width="1.15"/></svg>
<div class="t" style="left:467.62px;top:507.5px;line-height:20px;font-size:13.3px;color:#595959;">0</div>
<div class="t" style="left:460.62px;top:452.0px;line-height:20px;font-size:13.3px;color:#595959;">20</div>
<div class="t" style="left:460.62px;top:396.0px;line-height:20px;font-size:13.3px;color:#595959;">40</div>
<div class="t" style="left:460.62px;top:340.2px;line-height:20px;font-size:13.3px;color:#595959;">60</div>
<div class="t" style="left:460.62px;top:284.2px;line-height:20px;font-size:13.3px;color:#595959;">80</div>
<div class="t" style="left:453.62px;top:228.3px;line-height:20px;font-size:13.3px;color:#595959;">100</div>
<div class="t" style="left:453.62px;top:172.1px;line-height:20px;font-size:13.3px;color:#595959;">120</div>
<div class="t j" style="--w:35.2;left:509.2px;top:556.9px;line-height:20px;font-size:18px;letter-spacing:3.612px;color:#595959;transform-origin:0 0;transform:rotate(-90deg)">合計</div>
<div class="t j" style="--w:62.1;left:567.4px;top:585.9px;line-height:20px;font-size:18px;letter-spacing:1.537px;color:#595959;transform-origin:0 0;transform:rotate(-90deg)">技能実習</div>
<div class="t j" style="--w:119.6;left:625.6px;top:643.9px;line-height:20px;font-size:18px;letter-spacing:0.945px;color:#595959;transform-origin:0 0;transform:rotate(-90deg)">身分に基づくもの</div>
<div class="t j" style="--w:206.7;left:683.8px;top:730.9px;line-height:20px;font-size:18px;letter-spacing:1.047px;color:#595959;transform-origin:0 0;transform:rotate(-90deg)">身分に基づくもの_うち永住者</div>
<div class="t j" style="--w:206.7;left:742.0px;top:730.9px;line-height:20px;font-size:18px;letter-spacing:1.047px;color:#595959;transform-origin:0 0;transform:rotate(-90deg)">身分に基づくもの_うち定住者</div>
<div class="t j" style="--w:134.0;left:800.2px;top:658.4px;line-height:20px;font-size:18px;letter-spacing:0.889px;color:#595959;transform-origin:0 0;transform:rotate(-90deg)">専門的・技術的分野</div>
<div class="t j" style="--w:336.9;left:846.0px;top:861.4px;line-height:20px;font-size:18px;letter-spacing:0.823px;color:#595959;transform-origin:0 0;transform:rotate(-90deg)">専門的・技術的分野_うち技術・人文知識・国際業</div>
<div class="t j" style="--w:14.0;left:872.7px;top:702.3px;line-height:20px;font-size:18px;letter-spacing:0.000px;color:#595959;transform-origin:0 0;transform:rotate(-90deg)">務</div>
<div class="t j" style="--w:250.1;left:916.6px;top:774.4px;line-height:20px;font-size:18px;letter-spacing:0.945px;color:#595959;transform-origin:0 0;transform:rotate(-90deg)">専門的・技術的分野_うち高度専門職</div>
<div class="t j" style="--w:235.6;left:974.8px;top:759.9px;line-height:20px;font-size:18px;letter-spacing:0.974px;color:#595959;transform-origin:0 0;transform:rotate(-90deg)">専門的・技術的分野_うち特定技能</div>
<div class="t j" style="--w:35.2;left:1033.0px;top:556.9px;line-height:20px;font-size:18px;letter-spacing:3.612px;color:#595959;transform-origin:0 0;transform:rotate(-90deg)">留学</div>
<div class="t j" style="--w:48.2;left:1091.2px;top:571.4px;line-height:20px;font-size:18px;letter-spacing:2.056px;color:#595959;transform-origin:0 0;transform:rotate(-90deg)">その他</div>
<div class="t" style="--w:32.2;left:793.47px;top:873.0px;line-height:20px;font-size:14.45px;letter-spacing:0.038px;color:#595959;">2024</div>
<div class="a" style="left:456px;top:902px;width:94px;height:22px;background:linear-gradient(#ececec,#c9c9c9)"></div>
<div class="t j" style="--w:56.1;left:459.27px;top:903.0px;line-height:20px;font-size:17.25px;letter-spacing:0.010px;color:#222;">日付 (年)</div>
<svg style="left:522px;top:906px" width="24" height="16"><path d="M1 8h7l-3.5 4z" fill="#333"/><path d="M8 1h14l-5 6v8h-4V7z" fill="#7a7a7a"/></svg>
<div class="a" style="left:551px;top:902px;width:80px;height:22px;background:linear-gradient(#ececec,#c9c9c9)"></div>
<div class="t j" style="--w:56.7;left:553.27px;top:903.0px;line-height:20px;font-size:17.25px;letter-spacing:1.175px;color:#222;">在留資格</div>
<svg style="left:614px;top:909px" width="12" height="8"><path d="M1 1h10l-5 5.5z" fill="#333"/></svg>
<div class="a" style="left:1150px;top:410px;width:281px;height:22px;background:linear-gradient(#ececec,#c9c9c9)"></div>
<div class="t j" style="--w:33.2;left:1151.46px;top:410.6px;line-height:20px;font-size:18.4px;letter-spacing:2.593px;color:#222;">回答</div>
<svg style="left:1414px;top:417px" width="12" height="8"><path d="M1 1h10l-5 5.5z" fill="#333"/></svg>
<div class="a" style="left:1156px;top:441px;width:10px;height:10px;background:linear-gradient(#ccaaa3,#c08f83);border:1.3px solid #a0461c"></div>
<div class="t j" style="--w:33.1;left:1167.93px;top:436.4px;line-height:20px;font-size:20.7px;letter-spacing:0.529px;color:#595959;">不明</div>
<div class="a" style="left:1156px;top:469px;width:10px;height:10px;background:linear-gradient(#9ca4ab,#75818b);border:1.3px solid #0e2841"></div>
<div class="t j" style="--w:178.9;left:1168.01px;top:464.4px;line-height:20px;font-size:19.88px;letter-spacing:-0.093px;color:#595959;">日本国内の紹介会社・個人</div>
<div class="a" style="left:1156px;top:497px;width:10px;height:10px;background:linear-gradient(#acd8a3,#8dc983);border:1.3px solid #4ea72e"></div>
<div class="t j" style="--w:164.2;left:1168.01px;top:492.5px;line-height:20px;font-size:19.9px;letter-spacing:-0.073px;color:#595959;">日本国内のその他の機関</div>
<div class="a" style="left:1156px;top:525px;width:10px;height:10px;background:linear-gradient(#d4a2d0,#bf7bb7);border:1.3px solid #a02b93"></div>
<div class="t j" style="--w:208.3;left:1168.01px;top:520.5px;line-height:20px;font-size:19.84px;letter-spacing:-0.123px;color:#595959;">出身国・地域の紹介会社・個人</div>
<div class="a" style="left:1156px;top:554px;width:10px;height:10px;background:linear-gradient(#a2d4f4,#7dbfea);border:1.3px solid #0f9ed5"></div>
<div class="t j" style="--w:164.2;left:1168.01px;top:548.5px;line-height:20px;font-size:19.9px;letter-spacing:-0.073px;color:#595959;">出身国・地域の語学学校</div>
<div class="a" style="left:1156px;top:582px;width:10px;height:10px;background:linear-gradient(#a2b9a3,#7b9a7e);border:1.3px solid #196b24"></div>
<div class="t j" style="--w:252.4;left:1168.02px;top:576.5px;line-height:20px;font-size:19.79px;letter-spacing:-0.154px;color:#595959;">出身国・地域の学校（語学学校除く）</div>
<div class="a" style="left:1156px;top:610px;width:10px;height:10px;background:linear-gradient(#f8bca4,#f3a183);border:1.3px solid #e97132"></div>
<div class="t j" style="--w:193.6;left:1168.01px;top:604.6px;line-height:20px;font-size:19.85px;letter-spacing:-0.109px;color:#595959;">出身国・地域のその他の機関</div>
<div class="a" style="left:1156px;top:638px;width:10px;height:10px;background:linear-gradient(#a0b4c4,#7d98ad);border:1.3px solid #156082"></div>
<div class="t j" style="--w:46.8;left:1167.93px;top:632.6px;line-height:20px;font-size:20.7px;letter-spacing:-0.385px;color:#595959;">その他</div>
<div class="a" style="left:1389px;top:904px;width:19px;height:18px;background:linear-gradient(#ececec,#c9c9c9)"></div>
<div class="a" style="left:1410px;top:904px;width:19px;height:18px;background:linear-gradient(#ececec,#c9c9c9)"></div>
<svg style="left:1389px;top:904px" width="40" height="18"><path d="M5 9h9M9.5 4.5v9M26 9h8" stroke="#555" stroke-width="1.6"/></svg>
<svg style="left:0;top:0" width="1920" height="994"><rect x="443.5" y="132.5" width="1001" height="804" fill="none" stroke="#6b6b6b" stroke-width="1.5"/></svg>
<svg style="left:0;top:0" width="1920" height="994"><circle cx="443.5" cy="132.5" r="6" fill="#fff" stroke="#6b6b6b" stroke-width="2.6"/><circle cx="443.5" cy="534.5" r="6" fill="#fff" stroke="#6b6b6b" stroke-width="2.6"/><circle cx="443.5" cy="936.5" r="6" fill="#fff" stroke="#6b6b6b" stroke-width="2.6"/><circle cx="943.5" cy="132.5" r="6" fill="#fff" stroke="#6b6b6b" stroke-width="2.6"/><circle cx="943.5" cy="936.5" r="6" fill="#fff" stroke="#6b6b6b" stroke-width="2.6"/><circle cx="1444.5" cy="132.5" r="6" fill="#fff" stroke="#6b6b6b" stroke-width="2.6"/><circle cx="1444.5" cy="534.5" r="6" fill="#fff" stroke="#6b6b6b" stroke-width="2.6"/><circle cx="1444.5" cy="936.5" r="6" fill="#fff" stroke="#6b6b6b" stroke-width="2.6"/></svg>
<div class="a" style="left:1456px;top:98px;width:26px;height:855px;background:#e6e9ef"></div>
<div class="a" style="left:1459px;top:100px;width:20px;height:853px;background:#f3f3f3;border-radius:10px 10px 0 0"></div>
<svg style="left:1463px;top:103px" width="13" height="11"><path d="M1 10h11L6.5 1.5z" fill="#707070" stroke="#707070" stroke-linejoin="round"/></svg>
<div class="a" style="left:1464px;top:119px;width:11px;height:470px;background:#707070;border-radius:6px"></div>
<svg style="left:1463px;top:940px" width="13" height="11"><path d="M1 1h11L6.5 9.5z" fill="#707070" stroke="#707070" stroke-linejoin="round"/></svg>
<div class="a" style="left:0px;top:953px;width:1482px;height:41px;background:#e6e9ef"></div>
<svg style="left:30px;top:964px" width="12" height="16"><path d="M9 2L3 8l6 6" fill="none" stroke="#8a8a8a" stroke-width="1.3"/></svg>
<svg style="left:70px;top:964px" width="12" height="16"><path d="M3 2l6 6-6 6" fill="none" stroke="#8a8a8a" stroke-width="1.3"/></svg>
<div class="t" style="--w:37.5;left:151.70px;top:963.0px;line-height:20px;font-size:19.17px;letter-spacing:-0.119px;color:#333;">data</div>
<div class="a" style="left:207px;top:962px;width:1px;height:22px;background:#c8c8c8"></div>
<div class="a" style="left:213px;top:953px;width:66px;height:35px;background:#fff;border-radius:0 0 6px 6px"></div>
<div class="t" style="--w:43.6;left:224.19px;top:960.5px;line-height:20px;font-size:20.34px;letter-spacing:0.327px;color:#222;">pivot</div>
<div class="a" style="left:223px;top:982px;width:46px;height:3px;background:#107c41;border-radius:1px"></div>
<div class="a" style="left:284px;top:962px;width:1px;height:22px;background:#c8c8c8"></div>
<svg style="left:336px;top:964px" width="16" height="16"><path d="M8 1v14M1 8h14" stroke="#333" stroke-width="1.5"/></svg>
<div class="a" style="left:892.5px;top:967px;width:3px;height:3px;background:#222;border-radius:1px"></div><div class="a" style="left:892.5px;top:972.5px;width:3px;height:3px;background:#222;border-radius:1px"></div><div class="a" style="left:892.5px;top:978px;width:3px;height:3px;background:#222;border-radius:1px"></div>
<div class="a" style="left:915px;top:962px;width:543px;height:21px;background:#f5f5f5;border-radius:10px"></div>
<svg style="left:919px;top:966px" width="11" height="13"><path d="M9.5 1v11L1 6.5z" fill="#707070"/></svg>
<div class="a" style="left:935px;top:967px;width:447px;height:11px;background:#707070;border-radius:6px"></div>
<svg style="left:1443px;top:966px" width="11" height="13"><path d="M1 1v11l8.5-5.5z" fill="#707070"/></svg>
<div class="a" style="left:1482px;top:98px;width:438px;height:896px;background:#f0f0f0;border-left:1px solid #c6c9cf"></div>
<div class="t j" style="--w:188.0;left:1495.27px;top:115.4px;line-height:20px;font-size:19.28px;letter-spacing:0.459px;color:#222;font-weight:bold;">ピボットグラフのフィールド</div>
<svg style="left:1842px;top:119px" width="20" height="12"><path d="M1.5 1.5l8 8 8-8" fill="none" stroke="#333" stroke-width="1.4"/></svg>
<svg style="left:1885px;top:118px" width="15" height="15"><path d="M1 1l13 13M14 1L1 14" stroke="#333" stroke-width="1.4"/></svg>
<div class="t j" style="--w:64.1;left:1497.29px;top:151.6px;line-height:20px;font-size:17.1px;letter-spacing:-0.173px;color:#222;font-weight:bold;">アクティブ</div>
<div class="t j" style="--w:38.9;left:1587.77px;top:151.6px;line-height:20px;font-size:17.27px;letter-spacing:-0.043px;color:#333;">すべて</div>
<div class="a" style="left:1498px;top:178px;width:62px;height:4px;background:#107c41"></div>
<div class="t j" style="--w:278.0;left:1497.41px;top:195.9px;line-height:20px;font-size:15.89px;letter-spacing:-0.081px;color:#333;">レポートに追加するフィールドを選択してください:</div>
<div class="a" style="left:1848px;top:187px;width:57px;height:35px;background:#fff;border:1px solid #a6a6a6"></div>
<svg style="left:1858px;top:192px" width="24" height="24" viewBox="0 0 24 24"><path d="M12 2l2 2.5 3-1 .7 3.2 3.2.7-1 3L22 12l-2.1 1.6 1 3-3.2.7-.7 3.2-3-1L12 22l-1.9-2.5-3 1-.7-3.2-3.2-.7 1-3L2 12l2.2-1.6-1-3 3.2-.7.7-3.2 3 1z" fill="none" stroke="#333" stroke-width="1.2" stroke-linejoin="round"/><circle cx="12" cy="12" r="3" fill="none" stroke="#333" stroke-width="1.2"/></svg>
<svg style="left:1889px;top:201px" width="10" height="7"><path d="M1 1.5l3.5 3.5 3.5-3.5" fill="none" stroke="#333" stroke-width="1.2"/></svg>
<div class="a" style="left:1498px;top:239px;width:407px;height:30px;background:#fff;border:1px solid #a6a6a6"></div>
<div class="t j" style="--w:39.2;left:1504.46px;top:243.5px;line-height:20px;font-size:18.4px;letter-spacing:5.593px;color:#808080;">検索</div>
<svg style="left:1879px;top:242px" width="22" height="24"><circle cx="14" cy="9" r="6.5" fill="none" stroke="#333" stroke-width="1.3"/><path d="M9.3 13.7L2 21" stroke="#333" stroke-width="1.4"/></svg>
<div class="a" style="left:1498px;top:291px;width:407px;height:252px;background:#fff;border:1px solid #a6a6a6;overflow:hidden"></div>
<div class="a" style="left:1522px;top:291px;width:20px;height:2px;background:#444"></div>
<div class="a" style="left:1546px;top:296px;width:15px;height:15px;background:#fff;border:1px solid #6a6a6a"></div>
<div class="t j" style="--w:36.3;left:1567.54px;top:297.1px;line-height:20px;font-size:19.55px;letter-spacing:3.161px;color:#222;">日付</div>
<div class="a" style="left:1546px;top:327px;width:15px;height:15px;background:#107c41;border-radius:1px"></div>
<svg style="left:1546px;top:327px" width="15" height="15"><path d="M3.5 7.5l3 3 5-6" fill="none" stroke="#fff" stroke-width="1.3"/></svg>
<div class="t j" style="--w:64.6;left:1567.54px;top:327.7px;line-height:20px;font-size:19.55px;letter-spacing:1.154px;color:#222;font-weight:bold;">在留資格</div>
<div class="a" style="left:1546px;top:358px;width:15px;height:15px;background:#fff;border:1px solid #6a6a6a"></div>
<div class="t j" style="--w:36.3;left:1567.54px;top:358.9px;line-height:20px;font-size:19.55px;letter-spacing:3.161px;color:#222;">質問</div>
<svg style="left:1862px;top:362px" width="18" height="17"><path d="M1 1.5h16l-6 6.5v7.5l-4-2v-5.5z" fill="none" stroke="#444" stroke-width="1.2" stroke-linejoin="round"/></svg>
<div class="a" style="left:1546px;top:389px;width:15px;height:15px;background:#107c41;border-radius:1px"></div>
<svg style="left:1546px;top:389px" width="15" height="15"><path d="M3.5 7.5l3 3 5-6" fill="none" stroke="#fff" stroke-width="1.3"/></svg>
<div class="t j" style="--w:35.5;left:1567.54px;top:389.8px;line-height:20px;font-size:19.55px;letter-spacing:2.761px;color:#222;font-weight:bold;">回答</div>
<div class="a" style="left:1546px;top:420px;width:15px;height:15px;background:#107c41;border-radius:1px"></div>
<svg style="left:1546px;top:420px" width="15" height="15"><path d="M3.5 7.5l3 3 5-6" fill="none" stroke="#fff" stroke-width="1.3"/></svg>
<div class="t j" style="--w:68.5;left:1567.54px;top:421.0px;line-height:20px;font-size:19.55px;letter-spacing:0.084px;color:#222;font-weight:bold;">割合 (%)</div>
<div class="a" style="left:1546px;top:451px;width:15px;height:15px;background:#107c41;border-radius:1px"></div>
<svg style="left:1546px;top:451px" width="15" height="15"><path d="M3.5 7.5l3 3 5-6" fill="none" stroke="#fff" stroke-width="1.3"/></svg>
<div class="t j" style="--w:66.3;left:1567.54px;top:451.6px;line-height:20px;font-size:19.55px;letter-spacing:0.224px;color:#222;font-weight:bold;">日付 (年)</div>
<svg style="left:1862px;top:455px" width="18" height="17"><path d="M1 1.5h16l-6 6.5v7.5l-4-2v-5.5z" fill="none" stroke="#444" stroke-width="1.2" stroke-linejoin="round"/></svg>
<div class="a" style="left:1546px;top:482px;width:15px;height:15px;background:#fff;border:1px solid #6a6a6a"></div>
<div class="t j" style="--w:96.9;left:1567.54px;top:482.8px;line-height:20px;font-size:19.55px;letter-spacing:0.237px;color:#222;">日付 (四半期)</div>
<div class="a" style="left:1546px;top:513px;width:15px;height:15px;background:#fff;border:1px solid #6a6a6a"></div>
<div class="t j" style="--w:66.4;left:1567.54px;top:513.7px;line-height:20px;font-size:19.55px;letter-spacing:0.232px;color:#222;">日付 (月)</div>
<div class="a" style="left:1883px;top:292px;width:21px;height:250px;background:#f0f0f0"></div>
<svg style="left:1888px;top:298px" width="12" height="10"><path d="M1 9h10L6 1.5z" fill="#707070"/></svg>
<div class="a" style="left:1888px;top:328px;width:11px;height:185px;background:#707070;border-radius:1px"></div>
<svg style="left:1888px;top:526px" width="12" height="10"><path d="M1 1h10L6 8.5z" fill="#707070"/></svg>
<div class="a" style="left:1500px;top:562px;width:410px;height:1px;background-image:linear-gradient(to right,#b0b0b0 1px,transparent 1px);background-size:4px 1px"></div>
<div class="t j" style="--w:274.3;left:1501.70px;top:567.7px;line-height:20px;font-size:15.0px;letter-spacing:0.250px;color:#333;">次のボックス間でフィールドをドラッグしてください:</div>
<div class="a" style="left:1502px;top:634px;width:194px;height:125px;background:#fff"></div>
<div class="a" style="left:1706px;top:634px;width:199px;height:125px;background:#fff"></div>
<div class="a" style="left:1502px;top:800px;width:194px;height:124px;background:#fff"></div>
<div class="a" style="left:1706px;top:800px;width:199px;height:124px;background:#fff"></div>
<div class="a" style="left:1702.5px;top:608px;width:1.5px;height:317px;background:#c4c4c4"></div>
<div class="a" style="left:1502px;top:765.5px;width:403px;height:1.5px;background:#c4c4c4"></div>
<svg style="left:1506px;top:611px" width="16" height="15"><path d="M1 1h14l-5 6v7H6V7z" fill="#808080"/></svg>
<div class="t j" style="--w:54.2;left:1528.55px;top:609.5px;line-height:20px;font-size:14.45px;letter-spacing:-0.159px;color:#333;">フィルター</div>
<svg style="left:1712px;top:613px" width="13" height="12"><path d="M1.5 1v11" stroke="#999" stroke-width="2.5"/><path d="M5 1v11M7.5 1v11M10 1v11" stroke="#999" stroke-width="1"/></svg>
<div class="t j" style="--w:83.6;left:1732.27px;top:609.3px;line-height:20px;font-size:17.25px;letter-spacing:2.092px;color:#333;">凡例 (系列)</div>
<svg style="left:1507px;top:780px" width="14" height="11"><path d="M0 1h13M0 4h13M0 7h13M0 10h13" stroke="#888" stroke-width="1.2"/></svg>
<div class="t j" style="--w:98.5;left:1527.87px;top:776.0px;line-height:20px;font-size:17.25px;letter-spacing:2.065px;color:#333;">軸 (分類項目)</div>
<svg style="left:1712px;top:778px" width="14" height="14"><path d="M12 2.5V1H1l5.5 6L1 13h11v-1.5" fill="none" stroke="#888" stroke-width="1.2"/></svg>
<div class="t j" style="--w:15.0;left:1732.04px;top:776.0px;line-height:20px;font-size:19.55px;letter-spacing:0.000px;color:#333;">値</div>
<div class="a" style="left:1707px;top:636px;width:198px;height:28px;background:#fff;border:1px solid #8a8a8a"></div>
<div class="t j" style="--w:38.6;left:1716.16px;top:641.0px;line-height:20px;font-size:18.4px;letter-spacing:5.293px;color:#222;">回答</div>
<svg style="left:1887px;top:648px" width="10" height="7"><path d="M1 1.5l3.5 3.5 3.5-3.5" fill="none" stroke="#333" stroke-width="1.2"/></svg>
<div class="a" style="left:1503px;top:802px;width:192px;height:27px;background:#fff;border:1px solid #8a8a8a"></div>
<div class="t j" style="--w:66.9;left:1512.16px;top:806.4px;line-height:20px;font-size:18.4px;letter-spacing:1.311px;color:#222;">日付 (年)</div>
<svg style="left:1677px;top:813.4px" width="10" height="7"><path d="M1 1.5l3.5 3.5 3.5-3.5" fill="none" stroke="#333" stroke-width="1.2"/></svg>
<div class="a" style="left:1503px;top:832px;width:192px;height:26px;background:#fff;border:1px solid #8a8a8a"></div>
<div class="t j" style="--w:65.9;left:1512.16px;top:835.3px;line-height:20px;font-size:18.4px;letter-spacing:2.464px;color:#222;">在留資格</div>
<svg style="left:1677px;top:842.3px" width="10" height="7"><path d="M1 1.5l3.5 3.5 3.5-3.5" fill="none" stroke="#333" stroke-width="1.2"/></svg>
<div class="a" style="left:1707px;top:802px;width:198px;height:27px;background:#fff;border:1px solid #8a8a8a"></div>
<div class="t j" style="--w:113.2;left:1716.16px;top:806.4px;line-height:20px;font-size:18.4px;letter-spacing:0.836px;color:#222;">合計 / 割合 (%)</div>
<svg style="left:1887px;top:813.4px" width="10" height="7"><path d="M1 1.5l3.5 3.5 3.5-3.5" fill="none" stroke="#333" stroke-width="1.2"/></svg>
<div class="a" style="left:1506px;top:958px;width:16px;height:16px;background:#fff;border:1px solid #6a6a6a"></div>
<div class="t j" style="--w:164.7;left:1528.31px;top:957.2px;line-height:20px;font-size:16.89px;letter-spacing:-0.331px;color:#333;">レイアウトの更新を保留する</div>
<div class="a" style="left:1862px;top:950px;width:44px;height:31px;background:#f0f0f0;border:1px solid #d4d4d4"></div>
<div class="t j" style="--w:38.4;left:1867.56px;top:956.0px;line-height:20px;font-size:18.4px;letter-spacing:5.193px;color:#a6a6a6;">更新</div>
<div class="a" style="left:0px;top:993px;width:1920px;height:1px;background:#c8c8c8"></div>
<script>
(function(){
 var s=document.createElement('span');
 s.style.cssText='position:absolute;left:0;top:0;font-size:100px;font-family:"Liberation Sans",sans-serif;white-space:nowrap;visibility:hidden';
 s.textContent='\u691c\u7d22';document.body.appendChild(s);
 var wd=s.offsetWidth;document.body.removeChild(s);
 if(Math.abs(wd-150)<3)return;
 var els=document.querySelectorAll('.t');
 for(var i=0;i<els.length;i++){
  var el=els[i];var exp=parseFloat(el.style.getPropertyValue('--w'));
  if(!exp)continue;
  if(!/[\u3000-\uffff]/.test(el.textContent))continue;
  var f=parseFloat(el.style.fontSize);
  el.style.fontSize=(f*0.84)+'px';el.style.letterSpacing='0px';el.style.webkitTextStroke='0px';
  var cur=el.offsetWidth;var n=el.textContent.length;
  el.style.letterSpacing=((exp-cur)/n)+'px';
 }
})();
</script>

</body></html>
